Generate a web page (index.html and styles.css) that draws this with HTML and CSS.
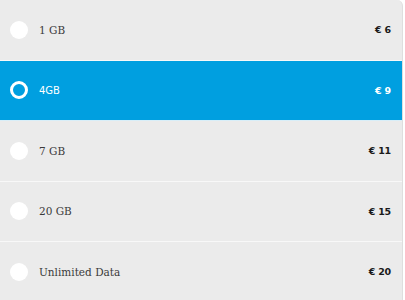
FILE: index.html
```html
<!DOCTYPE html>
<html>
<head>
<meta charset="utf-8">
<link rel="stylesheet" href="styles.css">
</head>
<body>
<ul class="plans">
  <li class="plan"><span class="radio"></span><span class="name">1 GB</span><span class="price">€ 6</span></li>
  <li class="plan selected"><span class="radio"></span><span class="name">4GB</span><span class="price">€ 9</span></li>
  <li class="plan"><span class="radio"></span><span class="name">7 GB</span><span class="price">€ 11</span></li>
  <li class="plan"><span class="radio"></span><span class="name">20 GB</span><span class="price">€ 15</span></li>
  <li class="plan"><span class="radio"></span><span class="name">Unlimited Data</span><span class="price">€ 20</span></li>
</ul>
</body>
</html>
```
FILE: styles.css
```css
html, body {
  margin: 0;
  padding: 0;
  background: #ffffff;
}
.plans {
  list-style: none;
  margin: 0;
  padding: 0;
  width: 402px;
  background: #ebebeb;
  border-right: 1px solid #dedede;
  border-top-right-radius: 6px;
  overflow: hidden;
  height: 300px;
}
.plan {
  display: flex;
  align-items: center;
  height: 59.5px;
  border-bottom: 1px solid #f8f8f8;
  padding: 0 11px 0 10px;
  color: #3a3a3a;
}
.plan.selected {
  background: #009fe0;
  color: #ffffff;
  border-bottom-color: #d8eef8;
}
.radio {
  width: 18px;
  height: 18px;
  border-radius: 50%;
  background: #ffffff;
  box-sizing: border-box;
  flex: none;
}
.selected .radio {
  background: transparent;
  border: 3px solid #ffffff;
}
.name {
  margin-left: 11px;
  font-family: "DejaVu Serif", serif;
  font-size: 10.5px;
  flex: 1;
}
.selected .name {
  font-family: "DejaVu Sans", sans-serif;
  font-size: 10px;
}
.price {
  font-family: "DejaVu Sans", sans-serif;
  font-weight: bold;
  font-size: 9.5px;
  letter-spacing: -0.2px;
  color: #1a1a1a;
}
.selected .price {
  color: #ffffff;
}
```
